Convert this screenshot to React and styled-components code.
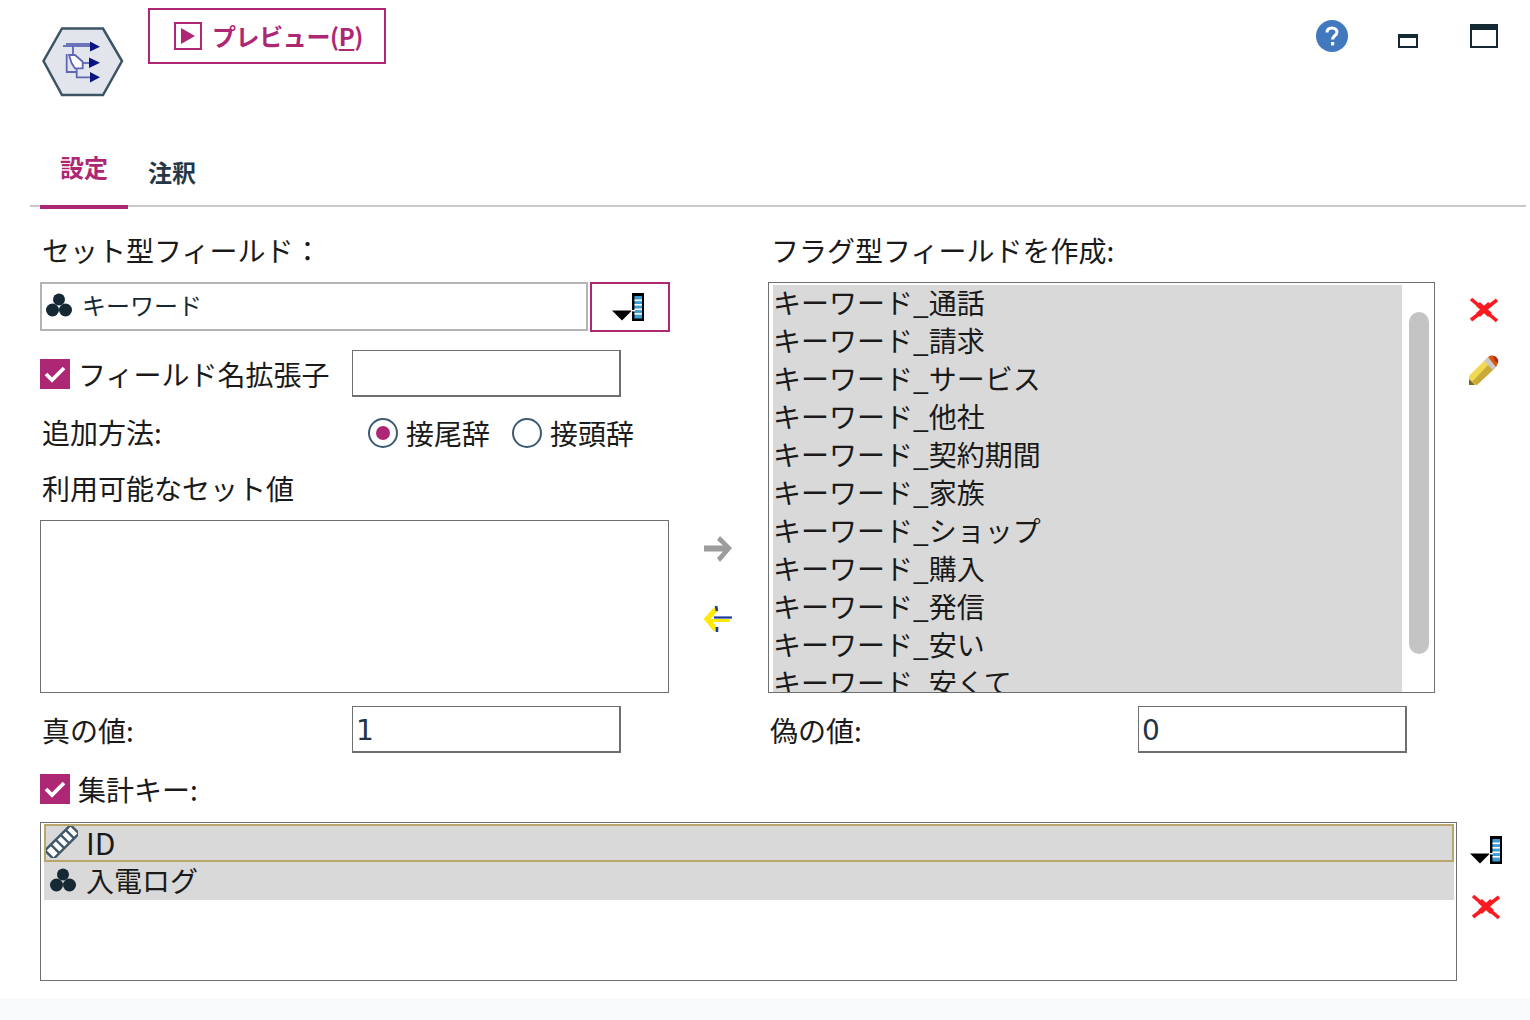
import React from 'react';
import styled, { createGlobalStyle } from 'styled-components';

const MAGENTA = '#ae2775';
const NAVY = '#152935';

const GlobalStyle = createGlobalStyle`
  html, body {
    margin: 0;
    padding: 0;
    background: #fff;
  }
  body {
    font-family: "Noto Sans CJK JP", "Noto Sans", sans-serif;
    color: #1a1a1a;
  }
`;

const Page = styled.div`
  width: 1530px;
  height: 1020px;
  overflow: hidden;
  display: flex;
  flex-direction: column;
`;

/* top bar */
const Header = styled.header`
  height: 122px;
  display: flex;
  align-items: flex-start;
  padding: 8px 32px 0 42px;
  box-sizing: border-box;
`;

const LogoSlot = styled.div`
  width: 106px;
  padding-top: 18px;
`;

const PreviewButton = styled.button`
  width: 238px;
  height: 56px;
  display: flex;
  align-items: center;
  gap: 10px;
  padding: 0 0 0 24px;
  box-sizing: border-box;
  background: #fff;
  border: 2px solid ${MAGENTA};
  color: ${MAGENTA};
  font-family: inherit;
  font-size: 24px;
  font-weight: 700;
  line-height: 1;
  letter-spacing: -0.4px;

  u {
    text-underline-offset: 3px;
  }
`;

const PlayBox = styled.span`
  width: 28px;
  height: 28px;
  box-sizing: border-box;
  border: 2px solid ${MAGENTA};
  display: flex;
  align-items: center;
  justify-content: center;
  flex: none;
`;

const WindowTools = styled.div`
  margin-left: auto;
  display: flex;
  align-items: flex-start;
  padding-top: 12px;
`;

const HelpIcon = styled.svg`
  width: 32px;
  height: 32px;
  margin-right: 50px;
`;

const MinimizeBox = styled.span`
  width: 20px;
  height: 14px;
  margin: 14px 52px 0 0;
  box-sizing: border-box;
  border: 2px solid ${NAVY};
  border-top-width: 4px;
`;

const MaximizeBox = styled.span`
  width: 28px;
  height: 24px;
  margin-top: 4px;
  box-sizing: border-box;
  border: 2px solid ${NAVY};
  border-top-width: 6px;
`;

/* tabs */
const TabBar = styled.nav`
  margin: 0 4px 0 30px;
  height: 85px;
  box-sizing: border-box;
  display: flex;
  padding-left: 10px;
  border-bottom: 2px solid #c8c8c8;
`;

const Tab = styled.div`
  width: 88px;
  height: ${(p) => (p.$active ? '87px' : '85px')};
  box-sizing: border-box;
  text-align: center;
  font-size: 24px;
  font-weight: 700;
  line-height: 32px;
  padding-top: ${(p) => (p.$active ? '29px' : '34px')};
  color: ${(p) => (p.$active ? MAGENTA : '#253746')};
  border-bottom: ${(p) => (p.$active ? `4px solid ${MAGENTA}` : 'none')};
`;

/* form */
const Form = styled.main`
  flex: 1;
  padding: 0 0 0 40px;
  display: flex;
  flex-direction: column;
`;

const Columns = styled.div`
  display: grid;
  grid-template-columns: 630px 98px 667px 1fr;
  height: 486px;
  padding-top: 27px;
  box-sizing: border-box;
`;

const LeftColumn = styled.section`
  display: flex;
  flex-direction: column;
`;

const FieldLabel = styled.div`
  font-size: 28px;
  line-height: 32px;
  height: ${(p) => p.$h || 48}px;
  margin-top: ${(p) => p.$top || 0}px;
  padding-left: ${(p) => p.$indent ?? 2}px;
  white-space: nowrap;
`;

const SelectRow = styled.div`
  display: flex;
  gap: 2px;
  height: 50px;
`;

const SelectBox = styled.div`
  width: 548px;
  height: 49px;
  box-sizing: border-box;
  border: 2px solid #b4b4b4;
  display: flex;
  align-items: center;
  gap: 9px;
  padding: 0 0 4px 3px;
  font-size: 24px;
  color: ${NAVY};
`;

const PickerButton = styled.div`
  width: 80px;
  height: 50px;
  box-sizing: border-box;
  border: 2px solid ${MAGENTA};
  display: flex;
  align-items: center;
  justify-content: center;
  padding-right: 4px;
`;

const Row = styled.div`
  display: flex;
  align-items: center;
  height: ${(p) => p.$h}px;
  margin-top: ${(p) => p.$top || 0}px;
`;

const CheckSquare = styled.span`
  width: 30px;
  height: 30px;
  background: ${MAGENTA};
  display: flex;
  align-items: center;
  justify-content: center;
  flex: none;
`;

const CheckLabel = styled.label`
  display: flex;
  align-items: center;
  gap: 8px;
  font-size: 28px;
  line-height: 36px;
  white-space: nowrap;
`;

const NameCell = styled.div`
  width: ${(p) => p.$w || 312}px;
  flex: none;
  font-size: 28px;
  line-height: 36px;
  padding-left: ${(p) => p.$indent ?? 0}px;
  box-sizing: border-box;
`;

const TextBox = styled.div`
  width: 269px;
  height: 47px;
  box-sizing: border-box;
  border: 1px solid #6f6f6f;
  border-bottom-width: 2px;
  border-right-width: 2px;
  color: #1f3545;
  font-family: "DejaVu Sans", sans-serif;
  font-size: 28px;
  line-height: 48px;
  padding-left: 3px;
`;

const RadioGroup = styled.div`
  display: flex;
  gap: 22px;
  margin: 2px 0 0 16px;
`;

const RadioLabel = styled.label`
  display: flex;
  align-items: center;
  gap: 8px;
  font-size: 28px;
  line-height: 36px;
`;

const RadioCircle = styled.span`
  width: 30px;
  height: 30px;
  box-sizing: border-box;
  border-radius: 50%;
  border: 2px solid #3e5a70;
  display: flex;
  align-items: center;
  justify-content: center;

  &::after {
    content: '';
    width: 14px;
    height: 14px;
    border-radius: 50%;
    background: ${(p) => (p.$on ? MAGENTA : 'transparent')};
  }
`;

const EmptyList = styled.div`
  width: 629px;
  height: 173px;
  margin-top: 19px;
  box-sizing: border-box;
  border: 1px solid #6f6f6f;
`;

const ArrowColumn = styled.div`
  display: flex;
  flex-direction: column;
  align-items: flex-start;
  padding: 301px 0 0 33px;
  gap: 42px;
`;

const RightColumn = styled.section`
  display: flex;
  flex-direction: column;
`;

const FlagList = styled.div`
  width: 667px;
  height: 411px;
  box-sizing: border-box;
  border: 1px solid #6f6f6f;
  padding: 2px 5px 0 4px;
  display: flex;
  gap: 7px;
  overflow: hidden;
`;

const FlagItems = styled.ul`
  flex: none;
  width: 629px;
  height: 100%;
  margin: 0;
  padding: 0;
  list-style: none;
  background: #d9d9d9;
`;

const FlagItem = styled.li`
  font-size: 28px;
  line-height: 34px;
  height: 38px;
  white-space: nowrap;
`;

const ScrollTrack = styled.div`
  flex: 1;
  padding-top: 27px;
`;

const ScrollThumb = styled.div`
  height: 342px;
  border-radius: 10px;
  background: #c4c4c4;
`;

const ToolColumn = styled.div`
  display: flex;
  flex-direction: column;
  align-items: flex-start;
  padding: 63px 0 0 33px;
  gap: 31px;
`;

const ValueGrid = styled.div`
  display: grid;
  grid-template-columns: 728px 1fr;
  height: 47px;
  margin-top: 13px;
`;

const KeyArea = styled.div`
  display: flex;
  align-items: flex-start;
  gap: 13px;
  margin-top: 18px;
`;

const KeyList = styled.div`
  width: 1417px;
  height: 159px;
  box-sizing: border-box;
  border: 1px solid #6f6f6f;
  padding: 1px 2px 0 3px;
`;

const KeyItem = styled.div`
  height: 38px;
  box-sizing: border-box;
  background: #d9d9d9;
  display: flex;
  align-items: center;
  gap: ${(p) => (p.$focus ? 8 : 9)}px;
  padding: 0 0 2px ${(p) => (p.$focus ? 0 : 5)}px;
  font-size: ${(p) => (p.$focus ? 30 : 28)}px;
  line-height: 36px;
  border: ${(p) => (p.$focus ? '2px solid #b8a66a' : 'none')};
`;

const KeyTools = styled.div`
  display: flex;
  flex-direction: column;
  gap: 30px;
  padding-top: 14px;
`;

const Footer = styled.div`
  height: 22px;
  flex: none;
  background: #f8f9fa;
`;

const HexLogo = () => (
  <svg width="82" height="72" viewBox="0 0 82 72">
    <polygon points="20,2.5 61,2.5 80,35 61,69 20,69 1.5,35" fill="#e2e6ec" stroke="#3c5464" strokeWidth="2.5" />
    <g stroke="#5e66b6" strokeWidth="1.8" fill="none">
      <path d="M21 20H50" />
      <path d="M24 18H48" />
      <path d="M31 20V30" />
      <path d="M24.7 28V46H34" />
      <path d="M41 37H49" />
      <path d="M34.7 42V51.3H50" />
      <path d="M27 29H33L40.7 35.7V42.3H33L29.7 37.3Z" fill="#fff" />
    </g>
    <g fill="#0a1480">
      <polygon points="48,15.5 58,20.7 48,25.5" />
      <polygon points="47,31.5 58,36.7 47,42" />
      <polygon points="48,46 58,51.3 48,56.5" />
    </g>
  </svg>
);

const SetIcon = () => (
  <svg width="28" height="26" viewBox="0 0 28 26">
    <g fill={NAVY}>
      <circle cx="14" cy="7.5" r="6" />
      <circle cx="7.5" cy="18" r="6.5" />
      <circle cx="20.5" cy="18" r="6.5" />
    </g>
  </svg>
);

const RulerIcon = () => (
  <svg width="32" height="32" viewBox="0 0 32 32">
    <g transform="rotate(-45 16 16)">
      <rect x="-2" y="10" width="36" height="12" fill="#fff" stroke="#41586a" strokeWidth="2.4" />
      <g fill="#41586a">
        <rect x="5" y="10" width="2.4" height="12" />
        <rect x="12" y="10" width="2.4" height="12" />
        <rect x="19" y="10" width="2.4" height="12" />
        <rect x="26" y="10" width="2.4" height="12" />
      </g>
    </g>
  </svg>
);

const PickerIcon = () => (
  <svg width="32" height="28" viewBox="0 0 32 28">
    <polygon points="0,17.5 20,17.5 10,27.5" fill="#000" />
    <rect x="20" y="0" width="12" height="28" fill="#000" />
    <rect x="22.5" y="3" width="7.5" height="22.5" fill="#3a9fd5" />
    <g fill="#fff">
      <rect x="22.5" y="6.5" width="7.5" height="1.6" />
      <rect x="22.5" y="11" width="7.5" height="1.6" />
      <rect x="22.5" y="15.5" width="7.5" height="1.6" />
      <rect x="22.5" y="20" width="7.5" height="1.6" />
    </g>
    <rect x="19" y="17" width="4" height="1.4" fill="#fff" />
  </svg>
);

const CrossIcon = () => (
  <svg width="30" height="26" viewBox="0 0 30 26">
    <path d="M3 2L29 24M29 3L3 23" stroke="#fb1a20" strokeWidth="3.6" fill="none" />
    <path d="M10 7L22 18M22 7L10 18" stroke="#fb1a20" strokeWidth="5.5" fill="none" />
  </svg>
);

const PencilIcon = () => (
  <svg width="32" height="32" viewBox="0 0 32 32">
    <polygon points="1,31 1,22 18,5 27,14 9,31" fill="#f2d84e" />
    <polygon points="4,28 21,10 27,14 9,31" fill="#c9a93a" />
    <polygon points="1,31 1,25 7,31" fill="#7a6a2a" />
    <polygon points="16,7 20,3 29,12 25,16" fill="#c9c9c9" />
    <path d="M20 3C24 -1 31 3 30 9L28 13Z" fill="#d9560f" />
    <path d="M25 2C28 2 31 5 30 9L27 7Z" fill="#b32a10" />
  </svg>
);

const Check = () => (
  <svg width="22" height="18" viewBox="0 0 22 18">
    <path d="M2 9L8 15L20 3" stroke="#fff" strokeWidth="3.8" fill="none" />
  </svg>
);

const flagItems = ['通話', '請求', 'サービス', '他社', '契約期間', '家族', 'ショップ', '購入', '発信', '安い', '安くて'];

export default function App() {
  return (
    <Page>
      <GlobalStyle />
      <Header>
        <LogoSlot>
          <HexLogo />
        </LogoSlot>
        <PreviewButton>
          <PlayBox>
            <svg width="16" height="18" viewBox="0 0 16 18">
              <polygon points="1,1 15,9 1,17" fill={MAGENTA} />
            </svg>
          </PlayBox>
          <span>プレビュー(<u>P</u>)</span>
        </PreviewButton>
        <WindowTools>
          <HelpIcon viewBox="0 0 32 32">
            <circle cx="16" cy="16" r="16" fill="#4178be" />
            <path d="M11 12.5C11 9.5 13.2 8 16 8C19 8 21 9.8 21 12.2C21 15.5 16.6 15.6 16.6 19.5" stroke="#fff" strokeWidth="3" fill="none" />
            <rect x="15" y="22" width="3.2" height="3.4" fill="#fff" />
          </HelpIcon>
          <MinimizeBox />
          <MaximizeBox />
        </WindowTools>
      </Header>

      <TabBar>
        <Tab $active>設定</Tab>
        <Tab>注釈</Tab>
      </TabBar>

      <Form>
        <Columns>
          <LeftColumn>
            <FieldLabel>セット型フィールド：</FieldLabel>
            <SelectRow>
              <SelectBox>
                <SetIcon />
                <span>キーワード</span>
              </SelectBox>
              <PickerButton>
                <PickerIcon />
              </PickerButton>
            </SelectRow>
            <Row $h={47} $top={18}>
              <NameCell>
                <CheckLabel>
                  <CheckSquare><Check /></CheckSquare>
                  フィールド名拡張子
                </CheckLabel>
              </NameCell>
              <TextBox />
            </Row>
            <Row $h={36} $top={17}>
              <NameCell $indent={2}>追加方法:</NameCell>
              <RadioGroup>
                <RadioLabel>
                  <RadioCircle $on />
                  接尾辞
                </RadioLabel>
                <RadioLabel>
                  <RadioCircle />
                  接頭辞
                </RadioLabel>
              </RadioGroup>
            </Row>
            <FieldLabel $h={29} $top={22}>利用可能なセット値</FieldLabel>
            <EmptyList />
          </LeftColumn>

          <ArrowColumn>
            <svg width="30" height="28" viewBox="0 0 30 28">
              <polygon points="1,10.5 20,10.5 14,5 17,1 29,13 17,27 14,23 20,16.5 1,16.5" fill="#9c9c9c" />
            </svg>
            <svg width="30" height="28" viewBox="0 0 30 28">
              <path d="M13 4L4 14L13 25" stroke="#ffe900" strokeWidth="5" fill="none" />
              <path d="M8 15.5H27" stroke="#ffe900" strokeWidth="3" fill="none" />
              <path d="M11 12.5H29" stroke="#1b3a9e" strokeWidth="2.2" fill="none" />
              <path d="M13 1L14 6M14 22L14 27" stroke="#1b3a9e" strokeWidth="2.6" fill="none" />
            </svg>
          </ArrowColumn>

          <RightColumn>
            <FieldLabel $indent={3}>フラグ型フィールドを作成:</FieldLabel>
            <FlagList>
              <FlagItems>
                {flagItems.map((item) => (
                  <FlagItem key={item}>キーワード_{item}</FlagItem>
                ))}
              </FlagItems>
              <ScrollTrack>
                <ScrollThumb />
              </ScrollTrack>
            </FlagList>
          </RightColumn>

          <ToolColumn>
            <CrossIcon />
            <PencilIcon />
          </ToolColumn>
        </Columns>

        <ValueGrid>
          <Row $h={47}>
            <NameCell $indent={2}>真の値:</NameCell>
            <TextBox>1</TextBox>
          </Row>
          <Row $h={47}>
            <NameCell $indent={2} $w={370}>偽の値:</NameCell>
            <TextBox>0</TextBox>
          </Row>
        </ValueGrid>

        <Row $h={30} $top={21}>
          <CheckLabel>
            <CheckSquare><Check /></CheckSquare>
            集計キー:
          </CheckLabel>
        </Row>

        <KeyArea>
          <KeyList>
            <KeyItem $focus>
              <RulerIcon />
              <span>ID</span>
            </KeyItem>
            <KeyItem>
              <SetIcon />
              <span>入電ログ</span>
            </KeyItem>
          </KeyList>
          <KeyTools>
            <PickerIcon />
            <CrossIcon />
          </KeyTools>
        </KeyArea>
      </Form>
      <Footer />
    </Page>
  );
}
